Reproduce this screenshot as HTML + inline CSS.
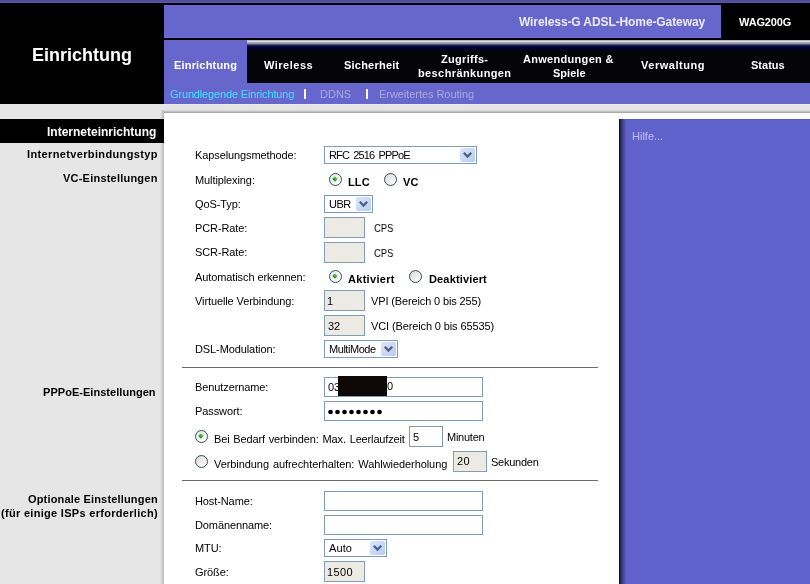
<!DOCTYPE html>
<html><head><meta charset="utf-8">
<style>
*{margin:0;padding:0;box-sizing:border-box}
html,body{width:810px;height:584px;overflow:hidden;background:#000;font-family:"Liberation Sans",sans-serif;}
.a{position:absolute}
.t{position:absolute;white-space:nowrap;line-height:1;will-change:transform}
#top{left:0;top:0;width:810px;height:3px;background:linear-gradient(#4f4f9c 0,#4f4f9c 2px,#5a54ac 2px)}
#hdrbox{left:164px;top:5px;width:557px;height:33px;background:linear-gradient(#6e68d8 0,#6e68d8 1px,#6666cc 1px,#6666cc 32px,#6f6fdc 32px)}
#nav{left:164px;top:40px;width:646px;height:43px;background:linear-gradient(#b8b8bc 0,#b8b8bc 1px,#dcdce6 1px,#dcdce6 2px,#a8a8b8 2px,#a8a8b8 3px,#9090a8 3px,#9090a8 4px,#505078 4px,#505078 5px,#202050 5px,#202050 6px,#080840 6px,#080840 7px,#000038 7px,#000038 9px,#020220 9px,#020220 10px,#050508 10px)}
#tab{left:164px;top:40px;width:83px;height:44px;background:#6666cc}
#sub{left:164px;top:83px;width:646px;height:21px;background:#6666cc}
#gray{left:0;top:104px;width:810px;height:480px;background:#e6e6e6}
#gband{left:164px;top:104px;width:646px;height:9px;background:linear-gradient(#ececec 0,#ececec 1px,#e4e4e4 1px,#e4e4e4 6px,#d8d8d8 6px,#d8d8d8 7px,#c0c0c0 7px,#c0c0c0 8px,#a8a8a4 8px)}
#lsh{left:160px;top:110px;width:4px;height:474px;background:linear-gradient(90deg,#e0e0e0 0,#e0e0e0 1px,#d6d6d6 1px,#d6d6d6 2px,#cacaca 2px,#cacaca 3px,#c0c0c0 3px)}
#white{left:164px;top:113px;width:646px;height:471px;background:#fff}
#help{left:619px;top:119px;width:191px;height:465px;background:linear-gradient(90deg,#101030 0,#101030 1px,#262650 1px,#262650 2px,#34346a 2px,#34346a 3px,#3e3e80 3px,#3e3e80 4px,#48489a 4px,#48489a 5px,#5050aa 5px,#5050aa 6px,#5858bb 6px,#5858bb 7px,#5e5ec6 7px,#5e5ec6 8px,#6262cc 8px)}
#helptop{left:627px;top:119px;width:183px;height:1px;background:#5a5ac6}
#lbar{left:0;top:119px;width:164px;height:24px;background:#000}
.w{color:#fff;font-weight:bold}
.nav{color:#fff;font-weight:bold;font-size:11px;letter-spacing:0.3px}
.lab{color:#000;font-size:11px;letter-spacing:-0.1px}
.lh{color:#000;font-weight:bold;font-size:11px;letter-spacing:0.3px;text-align:right}
.inp{position:absolute;border:1px solid #7f9db9;background:#fff}
.dis{background:#ebebe4}
.sel{position:absolute;border:1px solid #7f9db9;background:#fff}
.btn{position:absolute;right:1px;top:1px;width:15px;bottom:1px;background:linear-gradient(135deg,#dce6fb,#b7cbf5);border-radius:2px}
.hr{position:absolute;left:182px;width:416px;height:1px;background:#6b6b6b}

.lb{color:#000;font-weight:bold;font-size:11px;letter-spacing:0.2px}
.rad{position:absolute;width:13px;height:13px;border-radius:50%;border:1px solid #34495e;background:linear-gradient(135deg,#d6d6d0 0,#ececea 45%,#fff 100%)}
.rad.on{background:linear-gradient(135deg,#e8e8e4 0,#f8f8f6 50%,#fff 100%)}
.rad.on::after{content:"";position:absolute;left:3px;top:3px;width:4px;height:4px;background:linear-gradient(180deg,#62d062,#1a8a1a);transform:rotate(45deg)}
.btn svg{position:absolute;left:0;top:0}
.sl{letter-spacing:-0.5px}
</style></head><body>
<div class="a" id="top"></div>
<div class="a" id="hdrbox"></div>
<div class="a" id="nav"></div>
<div class="a" id="tab"></div>
<div class="a" id="sub"></div>
<div class="a" id="gray"></div>
<div class="a" id="gband"></div>
<div class="a" id="lsh"></div>
<div class="a" id="white"></div>
<div class="a" id="help"></div>
<div class="a" id="helptop"></div>
<div class="a" id="lbar"></div>

<div class="t w" style="left:32px;top:46px;font-size:18px">Einrichtung</div>
<div class="t w" style="left:519px;top:16px;font-size:12px;letter-spacing:-0.1px;color:#ebebf7">Wireless-G ADSL-Home-Gateway</div>
<div class="t w" style="left:739px;top:17px;font-size:11px;letter-spacing:-0.15px">WAG200G</div>

<div class="t nav" style="left:174px;top:60px;letter-spacing:0.18px">Einrichtung</div>
<div class="t nav" style="left:264px;top:60px;letter-spacing:0.5px">Wireless</div>
<div class="t nav" style="left:344px;top:60px;letter-spacing:0.22px">Sicherheit</div>
<div class="t nav" style="left:441px;top:54px">Zugriffs-</div>
<div class="t nav" style="left:418px;top:68px;letter-spacing:0.39px">beschränkungen</div>
<div class="t nav" style="left:523px;top:54px">Anwendungen &amp;</div>
<div class="t nav" style="left:553px;top:68px;letter-spacing:0.03px">Spiele</div>
<div class="t nav" style="left:641px;top:60px;letter-spacing:0.52px">Verwaltung</div>
<div class="t nav" style="left:751px;top:60px;letter-spacing:0.02px">Status</div>

<div class="t" style="left:170px;top:89px;font-size:11px;color:#3ae6ff;letter-spacing:-0.15px">Grundlegende Einrichtung</div>
<div class="a" style="left:304px;top:89px;width:2px;height:10px;background:#fff"></div>
<div class="t" style="left:320px;top:89px;font-size:11px;color:#aaaadd">DDNS</div>
<div class="a" style="left:366px;top:89px;width:2px;height:10px;background:#fff"></div>
<div class="t" style="left:379px;top:89px;font-size:11px;color:#aaaadd;letter-spacing:-0.05px">Erweitertes Routing</div>

<div class="t w" style="left:47px;top:126px;font-size:12px">Interneteinrichtung</div>
<div class="t lh" style="right:652px;top:149px;letter-spacing:0.36px">Internetverbindungstyp</div>
<div class="t lh" style="right:652px;top:173px;letter-spacing:0.22px">VC-Einstellungen</div>
<div class="t lh" style="right:654px;top:387px;letter-spacing:0.04px">PPPoE-Einstellungen</div>
<div class="t lh" style="right:652px;top:494px;letter-spacing:0.17px">Optionale Einstellungen</div>
<div class="t lh" style="right:652px;top:508px">(für einige ISPs erforderlich)</div>

<div class="t" style="left:632px;top:131px;font-size:11px;color:#c0c0f0">Hilfe...</div>

<!-- content -->
<div class="t lab" style="left:195px;top:150px;letter-spacing:-0.1px">Kapselungsmethode:</div>
<div class="sel" style="left:324px;top:146px;width:153px;height:18px"><div class="t lab" style="left:3.5px;top:3px;letter-spacing:-0.85px"><span style="word-spacing:2px">RFC 2516 PPPoE</span></div><div class="btn"><svg width="15" height="16" viewBox="0 0 15 16"><path d="M3.8 4.8 L7.5 8.5 L11.2 4.8" fill="none" stroke="#4d6185" stroke-width="2.3"/></svg></div></div>
<div class="t lab" style="left:195px;top:175px;letter-spacing:-0.1px">Multiplexing:</div>
<div class="rad on" style="left:329px;top:173px"></div>
<div class="t lb" style="left:348px;top:177px;letter-spacing:0.1px">LLC</div>
<div class="rad" style="left:384px;top:173px"></div>
<div class="t lb" style="left:403px;top:177px;letter-spacing:0.1px">VC</div>
<div class="t lab" style="left:195px;top:199px;letter-spacing:-0.1px">QoS-Typ:</div>
<div class="sel" style="left:324px;top:195px;width:49px;height:18px"><div class="t lab" style="left:3.5px;top:3px;letter-spacing:-0.5px">UBR</div><div class="btn"><svg width="15" height="16" viewBox="0 0 15 16"><path d="M3.8 4.8 L7.5 8.5 L11.2 4.8" fill="none" stroke="#4d6185" stroke-width="2.3"/></svg></div></div>
<div class="t lab" style="left:195px;top:223px;letter-spacing:-0.1px">PCR-Rate:</div>
<div class="inp dis" style="left:324px;top:217px;width:41px;height:21px"></div>
<div class="t lab" style="left:374px;top:223px;transform:scaleX(0.87);transform-origin:0 0">CPS</div>
<div class="t lab" style="left:195px;top:247px;letter-spacing:-0.1px">SCR-Rate:</div>
<div class="inp dis" style="left:324px;top:242px;width:41px;height:21px"></div>
<div class="t lab" style="left:374px;top:248px;transform:scaleX(0.87);transform-origin:0 0">CPS</div>
<div class="t lab" style="left:195px;top:272px;letter-spacing:-0.1px">Automatisch erkennen:</div>
<div class="rad on" style="left:329px;top:270px"></div>
<div class="t lb" style="left:348px;top:274px;letter-spacing:0.3px">Aktiviert</div>
<div class="rad" style="left:409px;top:270px"></div>
<div class="t lb" style="left:429px;top:274px;letter-spacing:0.15px">Deaktiviert</div>
<div class="t lab" style="left:195px;top:296px;letter-spacing:-0.1px">Virtuelle Verbindung:</div>
<div class="inp dis" style="left:324px;top:290px;width:41px;height:21px"><div class="t lab" style="left:2px;top:5px;letter-spacing:-0.1px">1</div></div>
<div class="t lab" style="left:371px;top:296px;letter-spacing:-0.13px">VPI (Bereich 0 bis 255)</div>
<div class="inp dis" style="left:324px;top:315px;width:41px;height:21px"><div class="t lab" style="left:3px;top:5px;letter-spacing:-0.1px">32</div></div>
<div class="t lab" style="left:371px;top:321px;letter-spacing:-0.12px">VCI (Bereich 0 bis 65535)</div>
<div class="t lab" style="left:195px;top:344px;letter-spacing:-0.1px">DSL-Modulation:</div>
<div class="sel" style="left:324px;top:340px;width:74px;height:18px"><div class="t lab" style="left:4px;top:3px;letter-spacing:-0.45px">MultiMode</div><div class="btn"><svg width="15" height="16" viewBox="0 0 15 16"><path d="M3.8 4.8 L7.5 8.5 L11.2 4.8" fill="none" stroke="#4d6185" stroke-width="2.3"/></svg></div></div>
<div class="hr" style="top:367px"></div>
<div class="t lab" style="left:195px;top:382px;letter-spacing:-0.1px">Benutzername:</div>
<div class="inp" style="left:324px;top:377px;width:159px;height:20px"><div class="t lab" style="left:3px;top:4px;letter-spacing:-0.1px">03</div></div>
<div class="a" style="left:338px;top:376px;width:49px;height:20px;background:#0d0805"></div>
<div class="t lab" style="left:387px;top:381px;letter-spacing:-0.1px">0</div>
<div class="t lab" style="left:195px;top:406px;letter-spacing:-0.1px">Passwort:</div>
<div class="inp" style="left:324px;top:401px;width:159px;height:20px"></div>
<svg class="a" style="left:0;top:0" width="810" height="584" fill="#000"><circle cx="330.5" cy="412" r="2.35"/><circle cx="337.5" cy="412" r="2.35"/><circle cx="344.5" cy="412" r="2.35"/><circle cx="351.5" cy="412" r="2.35"/><circle cx="358.5" cy="412" r="2.35"/><circle cx="365.5" cy="412" r="2.35"/><circle cx="372.5" cy="412" r="2.35"/><circle cx="379.5" cy="412" r="2.35"/></svg>
<div class="rad on" style="left:195px;top:430px"></div>
<div class="t lab" style="left:214px;top:434px;letter-spacing:-0.15px;word-spacing:1px">Bei Bedarf verbinden: Max. Leerlaufzeit</div>
<div class="inp" style="left:409px;top:426px;width:34px;height:21px"><div class="t lab" style="left:3px;top:5px;letter-spacing:-0.1px">5</div></div>
<div class="t lab" style="left:447px;top:432px;letter-spacing:-0.25px">Minuten</div>
<div class="rad" style="left:195px;top:455px"></div>
<div class="t lab" style="left:214px;top:459px;letter-spacing:-0.07px;word-spacing:1px">Verbindung aufrechterhalten: Wahlwiederholung</div>
<div class="inp dis" style="left:453px;top:451px;width:34px;height:21px"><div class="t lab" style="left:3px;top:4px;letter-spacing:0.4px">20</div></div>
<div class="t lab" style="left:491px;top:457px;letter-spacing:-0.25px">Sekunden</div>
<div class="hr" style="top:480px"></div>
<div class="t lab" style="left:195px;top:496px;letter-spacing:-0.1px">Host-Name:</div>
<div class="inp" style="left:324px;top:491px;width:159px;height:20px"></div>
<div class="t lab" style="left:195px;top:520px;letter-spacing:-0.1px">Domänenname:</div>
<div class="inp" style="left:324px;top:515px;width:159px;height:20px"></div>
<div class="t lab" style="left:195px;top:543px;letter-spacing:-0.1px">MTU:</div>
<div class="sel" style="left:324px;top:539px;width:63px;height:18px"><div class="t lab" style="left:4px;top:3px;letter-spacing:0.1px">Auto</div><div class="btn"><svg width="15" height="16" viewBox="0 0 15 16"><path d="M3.8 4.8 L7.5 8.5 L11.2 4.8" fill="none" stroke="#4d6185" stroke-width="2.3"/></svg></div></div>
<div class="t lab" style="left:195px;top:567px;letter-spacing:-0.1px">Größe:</div>
<div class="inp dis" style="left:324px;top:561px;width:41px;height:21px"><div class="t lab" style="left:2px;top:5px;letter-spacing:0.4px">1500</div></div>
</body></html>
